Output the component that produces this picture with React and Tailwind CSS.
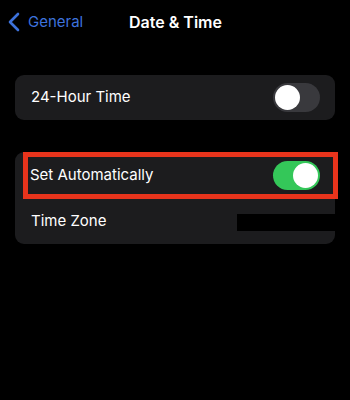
import React from 'react';

function Toggle({ on }) {
  return (
    <div
      className={
        'w-[47px] h-[29px] rounded-full p-[2px] flex ' +
        (on ? 'bg-[#34c759] justify-end' : 'bg-[#39393d] justify-start')
      }
    >
      <div className="w-[25px] h-[25px] rounded-full bg-white" />
    </div>
  );
}

export default function App() {
  return (
    <div className="w-[350px] h-[400px] bg-black text-white font-['Inter',sans-serif] overflow-hidden">
      {/* nav bar */}
      <div className="relative h-[44px] flex items-center">
        <div className="flex items-center pl-[8px] text-[#3d72dc]">
          <svg width="12" height="20" viewBox="0 0 12 20" fill="none">
            <path d="M10 2 L2 10 L10 18" stroke="currentColor" strokeWidth="2.6" strokeLinecap="round" strokeLinejoin="round" />
          </svg>
          <span className="ml-[8px] text-[15px]">General</span>
        </div>
        <div className="absolute left-0 right-0 text-center text-[16px] font-semibold pl-[1px]">
          Date &amp; Time
        </div>
      </div>

      {/* 24-hour card */}
      <div className="mt-[31px] mx-[15px] h-[45px] rounded-[9px] bg-[#1c1c1e] flex items-center justify-between pl-[16px] pr-[15px]">
        <span className="text-[15px]">24-Hour Time</span>
        <Toggle on={false} />
      </div>

      {/* automatic card */}
      <div className="relative mt-[32px] mx-[15px] rounded-[9px] bg-[#1c1c1e]">
        <div className="h-[46px] flex items-center justify-between pl-[15px] pr-[15px]">
          <span className="text-[15px]">Set Automatically</span>
          <Toggle on={true} />
        </div>
        <div className="h-[46px] flex items-center justify-between pl-[16px]">
          <span className="text-[15px]">Time Zone</span>
          <div className="w-[98px] h-[17px] bg-black mt-[2px]" />
        </div>
        {/* highlight box */}
        <div className="absolute left-[8px] top-0 w-[315px] h-[47px] border-[5px] border-[#e8341c] pointer-events-none" />
      </div>
    </div>
  );
}
